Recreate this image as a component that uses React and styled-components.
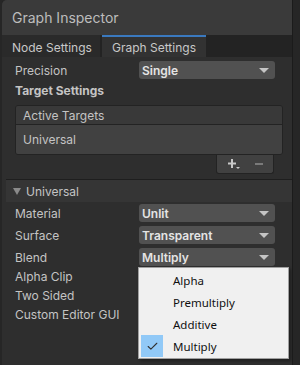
import styled, { createGlobalStyle } from "styled-components";
import { Check } from "lucide-react";

const Global = createGlobalStyle`
  html, body {
    margin: 0;
    background: #262626;
  }
  body {
    font-family: Inter, "Noto Sans", sans-serif;
  }
`;

const Page = styled.div`
  display: flex;
  height: 365px;
  padding-left: 2px;
  overflow: hidden;
`;

const Panel = styled.div`
  position: relative;
  width: 290px;
  display: flex;
  flex-direction: column;
  background: #2e2e2e;
  border-right: 1px solid #1b1b1b;
  border-top-left-radius: 5px;
  overflow: hidden;
`;

const TitleBar = styled.div`
  height: 35px;
  flex-shrink: 0;
  display: flex;
  align-items: center;
  padding-left: 10px;
  background: #3a3a3a;
  color: #bdbdbd;
  font-size: 14px;
`;

const Tabs = styled.div`
  display: flex;
  flex-shrink: 0;
  gap: 2px;
  height: 22px;
  background: #232323;
`;

const Tab = styled.div`
  display: flex;
  align-items: center;
  flex-shrink: 0;
  white-space: nowrap;
  padding: 0 10px;
  width: ${(p) => p.$w}px;
  box-sizing: border-box;
  font-size: 12px;
  color: #c8c8c8;
  background: ${(p) => (p.$active ? "#323232" : "#2a2a2a")};
  border-top: 2px solid ${(p) => (p.$active ? "#3a79bf" : "transparent")};
`;

const Body = styled.div`
  display: flex;
  flex-direction: column;
  padding-top: 4px;
`;

const Row = styled.div`
  display: grid;
  grid-template-columns: 124px 136px;
  align-items: center;
  height: 18px;
  padding-left: 13px;
  margin-top: ${(p) => p.$mt || 0}px;
`;

const Label = styled.div`
  font-size: 12px;
  white-space: nowrap;
  color: #c4c4c4;
  font-weight: ${(p) => (p.$bold ? 700 : 400)};
`;

const Select = styled.div`
  display: flex;
  align-items: center;
  justify-content: space-between;
  height: 18px;
  padding: 0 6px 0 3px;
  background: #515151;
  border-radius: 3px;
  font-size: 12px;
  font-weight: 600;
  color: #e4e4e4;
`;

const Caret = styled.span`
  width: 0;
  height: 0;
  border-left: 5px solid transparent;
  border-right: 5px solid transparent;
  border-top: 5px solid #c4c4c4;
`;

const List = styled.div`
  margin: 6px 9px 0 13px;
  display: flex;
  flex-direction: column;
  align-items: flex-end;
`;

const ListBox = styled.div`
  align-self: stretch;
  border: 1px solid #232323;
  border-radius: 3px;
  overflow: hidden;
`;

const ListHeader = styled.div`
  height: 18px;
  display: flex;
  align-items: center;
  padding-left: 7px;
  background: #393939;
  border-bottom: 1px solid #232323;
  font-size: 12px;
  color: #c4c4c4;
`;

const ListItem = styled.div`
  height: 29px;
  display: flex;
  align-items: center;
  padding-left: 7px;
  background: #414141;
  font-size: 12px;
  color: #c4c4c4;
`;

const ListFooter = styled.div`
  width: 56px;
  height: 18px;
  margin-right: 9px;
  display: flex;
  align-items: center;
  justify-content: center;
  gap: 13px;
  background: #414141;
  border: 1px solid #232323;
  border-top: none;
  border-radius: 0 0 3px 3px;
`;

const Section = styled.div`
  margin: 5px 0 0 4px;
  height: 22px;
  display: flex;
  align-items: center;
  gap: 5px;
  padding-left: 7px;
  background: #353535;
  border-top: 1px solid #1e1e1e;
  font-size: 12px;
  color: #c4c4c4;
`;

const Triangle = styled.span`
  width: 0;
  height: 0;
  border-left: 4px solid transparent;
  border-right: 4px solid transparent;
  border-top: 7px solid #8a8a8a;
`;

const Props = styled.div`
  display: flex;
  flex-direction: column;
  gap: 4px;
  padding-top: 2px;
`;

const Toggles = styled.div`
  display: flex;
  flex-direction: column;
  padding: 1px 0 0 13px;
`;

const ToggleLabel = styled(Label)`
  height: 19px;
  line-height: 19px;
`;

const Menu = styled.div`
  position: absolute;
  left: 136px;
  top: 267px;
  width: 149px;
  padding: 1px 0;
  background: #f0f0f0;
  border: 1px solid #a0a0a0;
  box-shadow: 2px 2px 3px rgba(0, 0, 0, 0.35);
`;

const MenuItem = styled.div`
  display: flex;
  align-items: center;
  height: 22px;
  font-family: "Noto Sans", "Open Sans", sans-serif;
  font-size: 11.5px;
  color: #101010;
`;

const CheckBox = styled.span`
  display: flex;
  align-items: center;
  justify-content: center;
  width: 22px;
  height: 22px;
  margin: 0 10px 0 2px;
  background: ${(p) => (p.$on ? "#91c9f7" : "transparent")};
`;

const fields = [
  ["Material", "Unlit"],
  ["Surface", "Transparent"],
  ["Blend", "Multiply"],
];

const blends = ["Alpha", "Premultiply", "Additive", "Multiply"];

export default function App() {
  return (
    <>
      <Global />
      <Page>
        <Panel>
          <TitleBar>Graph Inspector</TitleBar>
          <Tabs>
            <Tab $w={98}>Node Settings</Tab>
            <Tab $w={104} $active>
              Graph Settings
            </Tab>
          </Tabs>
          <Body>
            <Row>
              <Label>Precision</Label>
              <Select>
                Single
                <Caret />
              </Select>
            </Row>
            <Row $mt={2}>
              <Label $bold>Target Settings</Label>
            </Row>
            <List>
              <ListBox>
                <ListHeader>Active Targets</ListHeader>
                <ListItem>Universal</ListItem>
              </ListBox>
              <ListFooter>
                <svg width="14" height="12" viewBox="0 0 14 12">
                  <path d="M5 1v9M1 5.5h8" stroke="#c8c8c8" strokeWidth="2" />
                  <path d="M9 9h4l-2 2z" fill="#c8c8c8" />
                </svg>
                <svg width="10" height="10" viewBox="0 0 10 10">
                  <path d="M1 5h8" stroke="#7a7a7a" strokeWidth="2" />
                </svg>
              </ListFooter>
            </List>
            <Section>
              <Triangle />
              Universal
            </Section>
            <Props>
              {fields.map(([label, value]) => (
                <Row key={label}>
                  <Label>{label}</Label>
                  <Select>
                    {value}
                    <Caret />
                  </Select>
                </Row>
              ))}
            </Props>
            <Toggles>
              <ToggleLabel>Alpha Clip</ToggleLabel>
              <ToggleLabel>Two Sided</ToggleLabel>
              <ToggleLabel>Custom Editor GUI</ToggleLabel>
            </Toggles>
          </Body>
          <Menu>
            {blends.map((b) => (
              <MenuItem key={b}>
                <CheckBox $on={b === "Multiply"}>
                  {b === "Multiply" && <Check size={13} color="#333" strokeWidth={2} />}
                </CheckBox>
                {b}
              </MenuItem>
            ))}
          </Menu>
        </Panel>
      </Page>
    </>
  );
}
